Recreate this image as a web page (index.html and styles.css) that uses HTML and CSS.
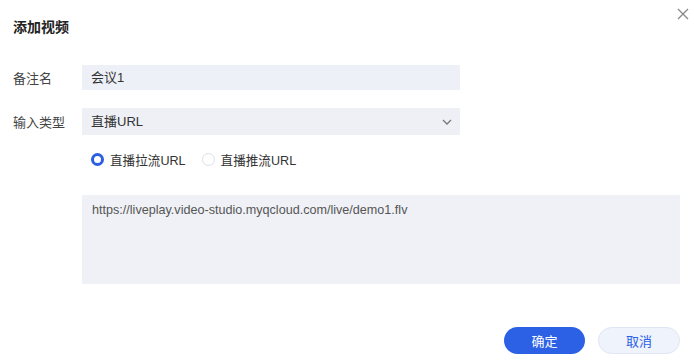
FILE: index.html
```html
<!DOCTYPE html>
<html lang="zh-CN">
<head>
    <meta charset="UTF-8">
    <title>添加视频</title>
    <link rel="stylesheet" href="styles.css">
</head>
<body>
    <div class="dialog">
        <div class="dialog-header">
            <h1>添加视频</h1>
            <button type="button" class="close-btn" aria-label="关闭">
                <svg width="12" height="12" viewBox="0 0 12 12"><path d="M1 1L11 11M11 1L1 11" stroke="#888" stroke-width="1.3" fill="none"/></svg>
            </button>
        </div>

        <form class="dialog-body">
            <div class="form-row">
                <label class="form-label">备注名</label>
                <div class="field">会议1</div>
            </div>
            <div class="form-row row-select">
                <label class="form-label">输入类型</label>
                <div class="field select">
                    <span>直播URL</span>
                    <svg width="10" height="6" viewBox="0 0 10 6"><path d="M1 1L5 5L9 1" stroke="#777" stroke-width="1.3" fill="none"/></svg>
                </div>
            </div>
            <div class="radio-row">
                <span class="radio-option">
                    <span class="radio checked"></span>直播拉流URL
                </span>
                <span class="radio-option">
                    <span class="radio"></span>直播推流URL
                </span>
            </div>
            <div class="url-box">https://liveplay.video-studio.myqcloud.com/live/demo1.flv</div>
        </form>

        <div class="dialog-footer">
            <button type="button" class="btn btn-primary">确定</button>
            <button type="button" class="btn btn-default">取消</button>
        </div>
    </div>
</body>
</html>
```

FILE: styles.css
```css
body {
    margin: 0;
    background-color: #fff;
    font-family: "Liberation Sans", Arial, "Noto Sans CJK SC", sans-serif;
    font-size: 13px;
    color: #333;
}
.dialog {
    position: relative;
    width: 694px;
    height: 360px;
    box-sizing: border-box;
    padding: 0 14px 0 13px;
}
.dialog-header {
    padding-top: 18px;
}
.dialog-header h1 {
    margin: 0;
    font-size: 14px;
    line-height: 18px;
    font-weight: bold;
    color: #222;
}
.close-btn {
    position: absolute;
    top: 8px;
    right: 5px;
    width: 12px;
    height: 12px;
    padding: 0;
    border: none;
    background: none;
    display: flex;
}
.dialog-body {
    margin-top: 29px;
}
.form-row {
    display: flex;
    align-items: center;
}
.row-select {
    margin-top: 18px;
}
.form-label {
    width: 69px;
    color: #444;
}
.field {
    width: 378px;
    height: 25px;
    box-sizing: border-box;
    padding: 0 9px;
    background-color: #edf0f7;
    line-height: 25px;
    color: #333;
}
.field.select {
    height: 27px;
    display: flex;
    align-items: center;
    justify-content: space-between;
    background-color: #eef0f6;
    padding-right: 8px;
}
.radio-row {
    margin-top: 15px;
    margin-left: 78px;
    height: 18px;
    display: flex;
    align-items: center;
    gap: 16px;
    font-size: 12.6px;
    color: #333;
}
.radio-option {
    display: flex;
    align-items: center;
}
.radio {
    width: 13px;
    height: 13px;
    box-sizing: border-box;
    border-radius: 50%;
    border: 1px solid #dcdfe6;
    background-color: #fff;
    margin-right: 6px;
}
.radio.checked {
    border: 3.5px solid #2b5fe0;
}
.url-box {
    margin-top: 27px;
    margin-left: 69px;
    width: 598px;
    height: 89px;
    box-sizing: border-box;
    padding: 7px 10px;
    background-color: #eff1f6;
    color: #555;
    font-size: 12.6px;
    line-height: 16px;
}
.dialog-footer {
    margin-top: 43px;
    display: flex;
    justify-content: flex-end;
    gap: 13px;
}
.btn {
    width: 81px;
    height: 27px;
    border-radius: 14px;
    font-family: "Noto Sans CJK SC", sans-serif;
    font-size: 13px;
    padding: 0;
    cursor: pointer;
}
.btn-primary {
    background-color: #2c61e6;
    border: none;
    color: #fff;
}
.btn-default {
    background-color: #eff3fc;
    border: 1px solid #dfe5f3;
    color: #2c61e6;
    width: 82px;
}
```
